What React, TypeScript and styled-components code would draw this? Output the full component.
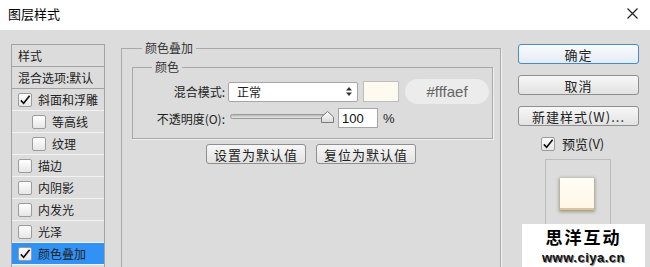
import React from 'react'
import styled, { createGlobalStyle } from 'styled-components'

const GlobalStyle = createGlobalStyle`
  html, body {
    margin: 0;
    padding: 0;
    width: 650px;
    height: 267px;
    overflow: hidden;
    background: #dcdcdc;
  }
  * {
    box-sizing: border-box;
  }
  body {
    font-family: "Noto Sans CJK SC", "Liberation Sans", sans-serif;
    font-size: 12px;
    color: #1e1e1e;
  }
`

const Window = styled.div`
  width: 650px;
  height: 267px;
  display: flex;
  flex-direction: column;
`

const TitleBar = styled.div`
  height: 30px;
  background: #ffffff;
  display: flex;
  align-items: center;
  justify-content: space-between;
  padding: 0 12px 4px 8px;
  font-size: 13px;
  color: #000;
`

const Body = styled.div`
  position: relative;
  flex: 1;
  display: flex;
  align-items: flex-start;
  overflow: hidden;
  background: #dcdcdc;
`

const StyleList = styled.div`
  width: 94px;
  height: 240px;
  margin: 14px 0 0 11px;
  border: 1px solid #a3a3a3;
  border-bottom: none;
  display: flex;
  flex-direction: column;
`

const ListRow = styled.div<{ $indent?: boolean; $selected?: boolean; $dark?: boolean }>`
  height: 22px;
  flex: none;
  display: flex;
  align-items: center;
  gap: 6px;
  padding-left: ${({ $indent }) => ($indent ? '20px' : '6px')};
  border-bottom: 1px solid ${({ $dark }) => ($dark ? '#a3a3a3' : '#f2f2f2')};
  background: ${({ $selected }) => ($selected ? '#3192f5' : 'transparent')};
  white-space: nowrap;
  color: #222;
`

const Box = styled.span`
  width: 14px;
  height: 14px;
  flex: none;
  border: 1px solid #9c9c9c;
  border-radius: 2px;
  background: linear-gradient(#ffffff, #e6e6e6);
  display: flex;
  align-items: center;
  justify-content: center;
`

const Group = styled.fieldset<{ $w: number; $h?: number; $mt: number }>`
  width: ${({ $w }) => $w}px;
  height: ${({ $h }) => ($h ? `${$h}px` : 'auto')};
  margin: ${({ $mt }) => $mt}px 0 0 0;
  padding: 0 10px;
  min-width: 0;
  border: 1px solid #a9a9a9;
  box-shadow: 1px 1px 0 #f0f0f0;
`

const OuterGroup = styled(Group)`
  margin-left: 16px;
  flex: none;
`

const InnerGroup = styled(Group)`
  padding: 5px 0 10px 0;
`

const Legend = styled.legend<{ $ml: number }>`
  margin-left: ${({ $ml }) => $ml}px;
  padding: 0 3px;
  line-height: 14px;
  font-size: 12px;
  color: #333;
`

const FieldRow = styled.div<{ $h: number; $mt?: number }>`
  height: ${({ $h }) => $h}px;
  margin-top: ${({ $mt }) => $mt ?? 0}px;
  display: flex;
  align-items: center;
`

const Label = styled.span`
  width: 92px;
  text-align: right;
  white-space: nowrap;
  color: #222;
`

const Select = styled.div`
  width: 130px;
  height: 20px;
  margin-left: 3px;
  background: #fff;
  border: 1px solid #a6a6a6;
  border-radius: 2px;
  display: flex;
  align-items: center;
  justify-content: space-between;
  padding: 0 5px 0 8px;
`

const Swatch = styled.div<{ $color: string }>`
  width: 36px;
  height: 21px;
  margin-left: 5px;
  background: ${({ $color }) => $color};
  border: 1px solid #bdbdbd;
`

const HexPill = styled.div`
  width: 84px;
  height: 25px;
  margin-left: 6px;
  border-radius: 13px;
  background: #ececec;
  color: #666;
  font-family: "Liberation Sans", sans-serif;
  font-size: 15px;
  display: flex;
  align-items: center;
  justify-content: center;
`

const Slider = styled.div`
  position: relative;
  width: 104px;
  height: 20px;
  margin-left: 5px;
  display: flex;
  align-items: center;
`

const Track = styled.div`
  width: 100px;
  height: 5px;
  margin-top: -4px;
  border: 1px solid #9a9a9a;
  border-radius: 3px;
  background: linear-gradient(#b8b8b8, #e6e6e6);
`

const Thumb = styled.svg`
  position: absolute;
  left: 91px;
  top: 3px;
`

const NumberInput = styled.div`
  width: 40px;
  height: 20px;
  margin-left: 4px;
  background: #fff;
  border: 1px solid #a6a6a6;
  padding-left: 3px;
  display: flex;
  align-items: center;
  font-family: "Liberation Sans", sans-serif;
  font-size: 13px;
  color: #111;
`

const Unit = styled.span`
  margin-left: 5px;
  font-family: "Liberation Sans", sans-serif;
  font-size: 13px;
`

const ButtonRow = styled.div`
  display: flex;
  justify-content: center;
  gap: 10px;
  margin-top: 5px;
`

const Button = styled.div<{ $w?: number; $primary?: boolean }>`
  width: ${({ $w }) => ($w ? `${$w}px` : '100%')};
  height: 20px;
  flex: none;
  border: 1px solid ${({ $primary }) => ($primary ? '#4a8bc4' : '#8f8f8f')};
  border-radius: 3px;
  background: ${({ $primary }) =>
    $primary ? 'linear-gradient(#f8fbfe, #e4ecf4)' : 'linear-gradient(#f7f7f7, #e2e2e2)'};
  display: flex;
  align-items: center;
  justify-content: center;
  white-space: nowrap;
  color: #222;
  font-size: 13px;
  letter-spacing: 1px;
`

const RightColumn = styled.div`
  width: 121px;
  margin: 14px 0 0 17px;
  display: flex;
  flex-direction: column;
  gap: 11px;
  flex: none;
`

const PreviewCheck = styled.label`
  display: flex;
  align-items: center;
  gap: 7px;
  margin-top: -3px;
  padding-left: 23px;
  font-size: 13px;
  color: #222;
`

const PreviewBox = styled.div`
  width: 66px;
  height: 80px;
  margin: -5px 0 0 27px;
  border: 1px solid #bcbcbc;
  padding: 18px 0 0 14px;
`

const PreviewSquare = styled.div`
  width: 34px;
  height: 32px;
  background: linear-gradient(#fffdf6, #fff7e6);
  border-bottom: 2px solid #d9c49c;
  box-shadow: 0 1px 3px 1px rgba(110, 100, 70, 0.55);
`

const Watermark = styled.div`
  position: absolute;
  right: 5px;
  bottom: 0;
  width: 123px;
  height: 43px;
  background: #fff;
  display: flex;
  flex-direction: column;
  align-items: center;
  justify-content: center;
  gap: 2px;
`

const WatermarkTitle = styled.span`
  display: block;
  height: 22px;
  line-height: 22px;
  font-size: 17px;
  font-weight: 700;
  letter-spacing: 2px;
  color: #000;
`

const WatermarkUrl = styled.span`
  display: block;
  height: 15px;
  line-height: 15px;
  font-family: "Liberation Sans", sans-serif;
  font-size: 13px;
  font-weight: 700;
  letter-spacing: 0.5px;
  color: #111;
  text-shadow: 1px 1px 0 #888, -1px 0 0 #fff;
`

const Check = () => (
  <svg width="13" height="12" viewBox="0 0 13 12">
    <path d="M2 6.5 L5 9.5 L11.5 1.5" fill="none" stroke="#111" strokeWidth="1.8" />
  </svg>
)

const CheckBox = ({ checked }: { checked?: boolean }) => <Box>{checked && <Check />}</Box>

const styles: { name: string; checked?: boolean; indent?: boolean; selected?: boolean }[] = [
  { name: '斜面和浮雕', checked: true },
  { name: '等高线', indent: true },
  { name: '纹理', indent: true },
  { name: '描边' },
  { name: '内阴影' },
  { name: '内发光' },
  { name: '光泽' },
  { name: '颜色叠加', checked: true, selected: true },
]

export default function App() {
  return (
    <Window>
      <GlobalStyle />
      <TitleBar>
        <span>图层样式</span>
        <svg width="11" height="11" viewBox="0 0 11 11">
          <path d="M0.5 0.5 L10.5 10.5 M10.5 0.5 L0.5 10.5" stroke="#222" strokeWidth="1.2" />
        </svg>
      </TitleBar>
      <Body>
        <StyleList>
          <ListRow $dark>样式</ListRow>
          <ListRow $dark>混合选项:默认</ListRow>
          {styles.map((s) => (
            <ListRow key={s.name} $indent={s.indent} $selected={s.selected}>
              <CheckBox checked={s.checked} />
              {s.name}
            </ListRow>
          ))}
        </StyleList>

        <OuterGroup $w={380} $h={240} $mt={11}>
          <Legend $ml={10}>颜色叠加</Legend>
          <InnerGroup $w={361} $mt={5}>
            <Legend $ml={19}>颜色</Legend>
            <FieldRow $h={25}>
              <Label>混合模式:</Label>
              <Select>
                <span>正常</span>
                <svg width="6" height="9" viewBox="0 0 6 9">
                  <path d="M3 0 L6 3.5 H0 Z M3 9 L6 5.5 H0 Z" fill="#333" />
                </svg>
              </Select>
              <Swatch $color="#fffaef" />
              <HexPill>#fffaef</HexPill>
            </FieldRow>
            <FieldRow $h={20} $mt={4}>
              <Label>不透明度(O):</Label>
              <Slider>
                <Track />
                <Thumb width="13" height="12" viewBox="0 0 13 12">
                  <defs>
                    <linearGradient id="thumb" x1="0" y1="0" x2="0" y2="1">
                      <stop offset="0" stopColor="#ffffff" />
                      <stop offset="1" stopColor="#d8d8d8" />
                    </linearGradient>
                  </defs>
                  <path d="M6.5 0.5 L12.5 6 V11.5 H0.5 V6 Z" fill="url(#thumb)" stroke="#7a7a7a" />
                </Thumb>
              </Slider>
              <NumberInput>100</NumberInput>
              <Unit>%</Unit>
            </FieldRow>
          </InnerGroup>
          <ButtonRow>
            <Button $w={100}>设置为默认值</Button>
            <Button $w={100}>复位为默认值</Button>
          </ButtonRow>
        </OuterGroup>

        <RightColumn>
          <Button $primary>确定</Button>
          <Button>取消</Button>
          <Button>新建样式(W)...</Button>
          <PreviewCheck>
            <CheckBox checked />
            预览(V)
          </PreviewCheck>
          <PreviewBox>
            <PreviewSquare />
          </PreviewBox>
        </RightColumn>

        <Watermark>
          <WatermarkTitle>思洋互动</WatermarkTitle>
          <WatermarkUrl>www.ciya.cn</WatermarkUrl>
        </Watermark>
      </Body>
    </Window>
  )
}
